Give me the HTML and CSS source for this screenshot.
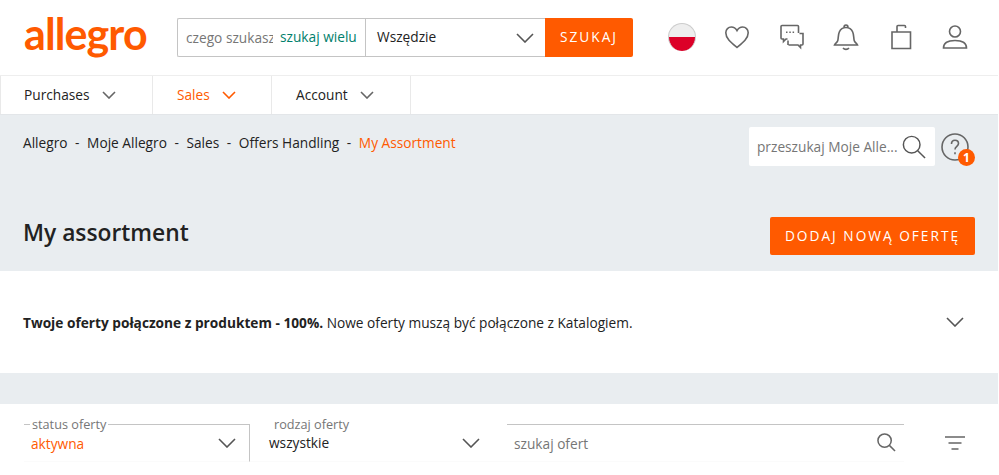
FILE: index.html
```html
<!DOCTYPE html>
<html lang="pl">
<head>
<meta charset="utf-8">
<title>My assortment</title>
<link rel="stylesheet" href="styles.css">
</head>
<body>
<div class="page">
  <header class="top">
    <div class="logo">allegro</div>
    <div class="search">
      <div class="s-input"><span class="s-ph">czego szukasz?</span></div>
      <div class="s-multi">szukaj wielu</div>
      <div class="s-cat"><span>Wszędzie</span>
        <svg class="chev-lg" viewBox="0 0 18 10"><path d="M1 1l8 8 8-8"/></svg>
      </div>
      <div class="s-btn">SZUKAJ</div>
    </div>
    <div class="icons">
      <div class="flag"></div>
      <svg class="ico" viewBox="0 0 28 28"><path d="M14 24.500C8 19.500 2.800 15.500 2.800 9.800 2.800 6.300 5.400 4 8.300 4c2.400 0 4.400 1.300 5.700 3.600C15.300 5.300 17.300 4 19.700 4c2.900 0 5.500 2.300 5.500 5.800 0 5.700-5.200 9.700-11.200 14.700z"/></svg>
      <svg class="ico" viewBox="0 0 28 28"><path d="M20.500 10V3.500a1 1 0 0 0-1-1H4a1 1 0 0 0-1 1V15a1 1 0 0 0 1 1h1.500v2.500L8 16h1.500"/><path d="M21.500 10.500H25V21a1 1 0 0 1-1 1h-1.500v2.500L20 22h-9.500M10 17.500V22"/><path d="M8 9.300h1.500M11.300 9.300h1.500M14.600 9.300h1.500" stroke-width="1.500"/></svg>
      <svg class="ico" viewBox="0 0 28 28"><path d="M2.500 22h23c-.5-1.500-2.800-2.500-3.300-4.500-.7-2.800-.2-5.500-1.500-8.500-1.100-2.600-3.500-4.500-6.700-4.500S8.400 6.400 7.300 9c-1.300 3-.8 5.700-1.500 8.500-.5 2-2.800 3-3.300 4.500zM12 4.500C12 3 13 2 14 2s2 1 2 2.500M11 25c1.500 1.800 4.500 1.800 6 0"/></svg>
      <svg class="ico" viewBox="0 0 28 28"><path d="M5 9h18.500v16.500H5zM10 9V3.500a1 1 0 0 1 1-1h6.500a1 1 0 0 1 1 1V5"/></svg>
      <svg class="ico" viewBox="0 0 28 28"><circle cx="14" cy="8.500" r="5.500"/><path d="M2.500 25c0-5 4.500-7.500 11.500-7.500S25.500 20 25.500 25z"/></svg>
    </div>
  </header>

  <nav class="nav">
    <div class="nav-item n1">Purchases <svg class="chev" viewBox="0 0 14 8"><path d="M1 1l6 6 6-6"/></svg></div>
    <div class="nav-item n2 active">Sales <svg class="chev" viewBox="0 0 14 8"><path d="M1 1l6 6 6-6"/></svg></div>
    <div class="nav-item n3">Account <svg class="chev" viewBox="0 0 14 8"><path d="M1 1l6 6 6-6"/></svg></div>
  </nav>

  <section class="hero">
    <div class="crumb-row">
      <div class="crumbs">
        <span>Allegro</span><i>-</i><span>Moje Allegro</span><i>-</i><span>Sales</span><i>-</i><span>Offers Handling</span><i>-</i><span class="cur">My Assortment</span>
      </div>
      <div class="tools">
        <div class="my-search"><span>przeszukaj Moje Alle...</span>
          <svg class="mag" viewBox="0 0 26 26"><circle cx="10.500" cy="10.500" r="9"/><path d="M17 17l8 8"/></svg>
        </div>
        <div class="help">
          <svg class="help-ico" viewBox="0 0 28 28"><circle cx="14" cy="14" r="13"/><path d="M10.500 11c0-2.200 1.500-3.700 3.500-3.700s3.500 1.400 3.500 3.300c0 2.800-3.500 2.900-3.500 6"/><path d="M14 19.200v2" /></svg>
          <span class="badge">1</span>
        </div>
      </div>
    </div>
    <div class="title-row">
      <h1>My assortment</h1>
      <div class="add-btn">DODAJ NOWĄ OFERTĘ</div>
    </div>
  </section>

  <section class="notice">
    <p><b>Twoje oferty połączone z produktem - 100%.</b> Nowe oferty muszą być połączone z Katalogiem.</p>
    <svg class="chev-lg" viewBox="0 0 18 10"><path d="M1 1l8 8 8-8"/></svg>
  </section>

  <div class="gap"></div>

  <section class="filters">
    <div class="f-box f-status">
      <div class="f-legend"><span>status oferty</span></div>
      <div class="f-val orange">aktywna</div>
      <svg class="chev-lg" viewBox="0 0 18 10"><path d="M1 1l8 8 8-8"/></svg>
    </div>
    <div class="f-box f-type">
      <div class="f-label">rodzaj oferty</div>
      <div class="f-val">wszystkie</div>
      <svg class="chev-lg" viewBox="0 0 18 10"><path d="M1 1l8 8 8-8"/></svg>
    </div>
    <div class="f-search">
      <span>szukaj ofert</span>
      <svg class="mag-sm" viewBox="0 0 20 20"><circle cx="8" cy="8" r="7"/><path d="M13 13l6 6"/></svg>
    </div>
    <svg class="filter-ico" viewBox="0 0 20 14"><path d="M0 1h20M3.500 7h13M6.500 13h7"/></svg>
  </section>
</div>
</body>
</html>
```
FILE: styles.css
```css
* { box-sizing: border-box; }
html, body { margin: 0; padding: 0; background: #fff; height: 100%; overflow: hidden; }
body { font-family: "Open Sans", sans-serif; font-size: 13.7px; color: #222; }
svg { fill: none; stroke: #666; stroke-width: 1.6; display: block; flex: none; }
.page { width: 998px; }

.top { height: 76px; display: flex; align-items: flex-start; border-bottom: 1px solid #eee; }
.logo { width: 177px; padding-left: 24px; margin-top: 8px; font-family: Lato, sans-serif; font-weight: 700; font-size: 43px; line-height: 52px; letter-spacing: -0.9px; color: #ff5a00; }
.search { display: flex; height: 39px; margin-top: 18px; width: 456px; }
.s-input { width: 103px; border: 1px solid #c4c4c4; border-right: 0; border-radius: 2px 0 0 2px; padding-left: 8px; overflow: hidden; line-height: 37px; }
.s-ph { color: #767676; white-space: nowrap; display: block; width: 87px; overflow: hidden; }
.s-multi { width: 85px; border: 1px solid #c4c4c4; border-width: 1px 0; line-height: 35px; color: #00806c; white-space: nowrap; }
.s-cat { width: 180px; display: flex; align-items: center; justify-content: space-between; border: 1px solid #c4c4c4; border-right: 0; padding: 0 11px; line-height: 35px; }
.s-cat span { margin-bottom: 2px; }
.s-btn { width: 88px; background: #ff5a00; color: #fff; border-radius: 0 2px 2px 0; text-align: center; line-height: 38px; letter-spacing: 2px; }
.icons { display: flex; align-items: center; margin-top: 23px; margin-left: 35px; }
.flag { width: 28px; height: 28px; border-radius: 50%; border: 1px solid #ccc; border-bottom: 0; background: linear-gradient(#eee 50%, #dc0028 50%); margin-right: 27px; }
.ico { width: 28px; height: 28px; margin-right: 26.500px; }
.ico:last-child { margin-right: 0; }

.nav { display: flex; height: 39px; border-bottom: 1px solid #e3e6e9; }
.nav-item { display: flex; align-items: center; height: 38px; padding-bottom: 2px; border-right: 1px solid #e9e9e9; }
.nav-item svg { margin-left: 12px; margin-top: 1px; }
.chev { width: 14px; height: 8px; }
.n1 { width: 153px; padding-left: 23px; border-left: 1px solid #e9e9e9; }
.n2 { width: 119px; padding-left: 24px; }
.n3 { width: 139px; padding-left: 24px; }
.active { color: #ff5a00; }
.active svg { stroke: #ff5a00; }

.hero { background: #e9edf0; height: 156px; padding: 12px 23px 0 23px; }
.crumb-row { display: flex; justify-content: space-between; align-items: flex-start; height: 90px; }
.crumbs { display: flex; line-height: 32px; }
.crumbs i { font-style: normal; padding: 0 7.600px; }
.cur { color: #ff5a00; }
.tools { display: flex; align-items: flex-start; }
.my-search { width: 186px; height: 39px; background: #fff; border-radius: 2px; display: flex; align-items: center; justify-content: space-between; padding: 0 9px 0 8px; color: #767676; white-space: nowrap; }
.mag { width: 24px; height: 24px; stroke: #555; }
.help { width: 34px; height: 39px; margin-left: 6px; margin-top: 6px; position: relative; }
.help-ico { width: 28px; height: 28px; }
.badge { position: absolute; left: 17px; top: 16px; width: 17px; height: 17px; border-radius: 50%; background: #ff5a00; color: #fff; font-size: 12px; font-weight: 700; line-height: 17px; text-align: center; }
.title-row { display: flex; justify-content: space-between; align-items: flex-start; }
h1 { margin: 0; font-size: 22.800px; font-weight: 600; line-height: 32px; color: #222; }
.add-btn { width: 205px; height: 38px; background: #ff5a00; color: #fff; border-radius: 2px; text-align: center; line-height: 38px; letter-spacing: 2px; white-space: nowrap; }

.notice { background: #fff; height: 102px; display: flex; align-items: center; justify-content: space-between; padding: 0 34px 0 23px; }
.notice p { margin: 0; }
.gap { height: 31px; background: #e9edf0; }

.filters { display: flex; align-items: flex-start; height: 71px; padding-top: 20px; position: relative; }
.f-box { position: relative; height: 38px; border-bottom: 1px solid #fbfbfb; }
.f-status { margin-left: 24px; width: 226px; border-top: 1px solid #c4c4c4; border-right: 1px solid #c4c4c4; }
.f-legend { position: absolute; top: -10px; left: 6px; }
.f-legend span { background: #fff; padding: 0 2px; font-size: 12.700px; color: #767676; line-height: 18px; display: block; }
.f-val { position: absolute; left: 7px; top: 7px; line-height: 24px; }
.orange { color: #ff5a00; }
.f-status .chev-lg { position: absolute; right: 13px; top: 13px; }
.f-type { width: 257px; }
.f-label { position: absolute; top: -9px; left: 24px; color: #767676; font-size: 12.700px; line-height: 18px; }
.f-type .f-val { left: 19px; top: 7px; }
.f-type .chev-lg { position: absolute; right: 27px; top: 14px; }
.chev-lg { width: 18px; height: 10px; stroke: #555; }
.f-search { width: 397px; height: 38px; border-top: 1px solid #c4c4c4; border-bottom: 1px solid #fbfbfb; position: relative; color: #767676; }
.f-search span { position: absolute; left: 7px; top: 7px; line-height: 24px; }
.mag-sm { position: absolute; left: 370px; top: 8px; width: 19px; height: 19px; }
.filter-ico { position: absolute; left: 945px; top: 32px; width: 20px; height: 14px; }
```
